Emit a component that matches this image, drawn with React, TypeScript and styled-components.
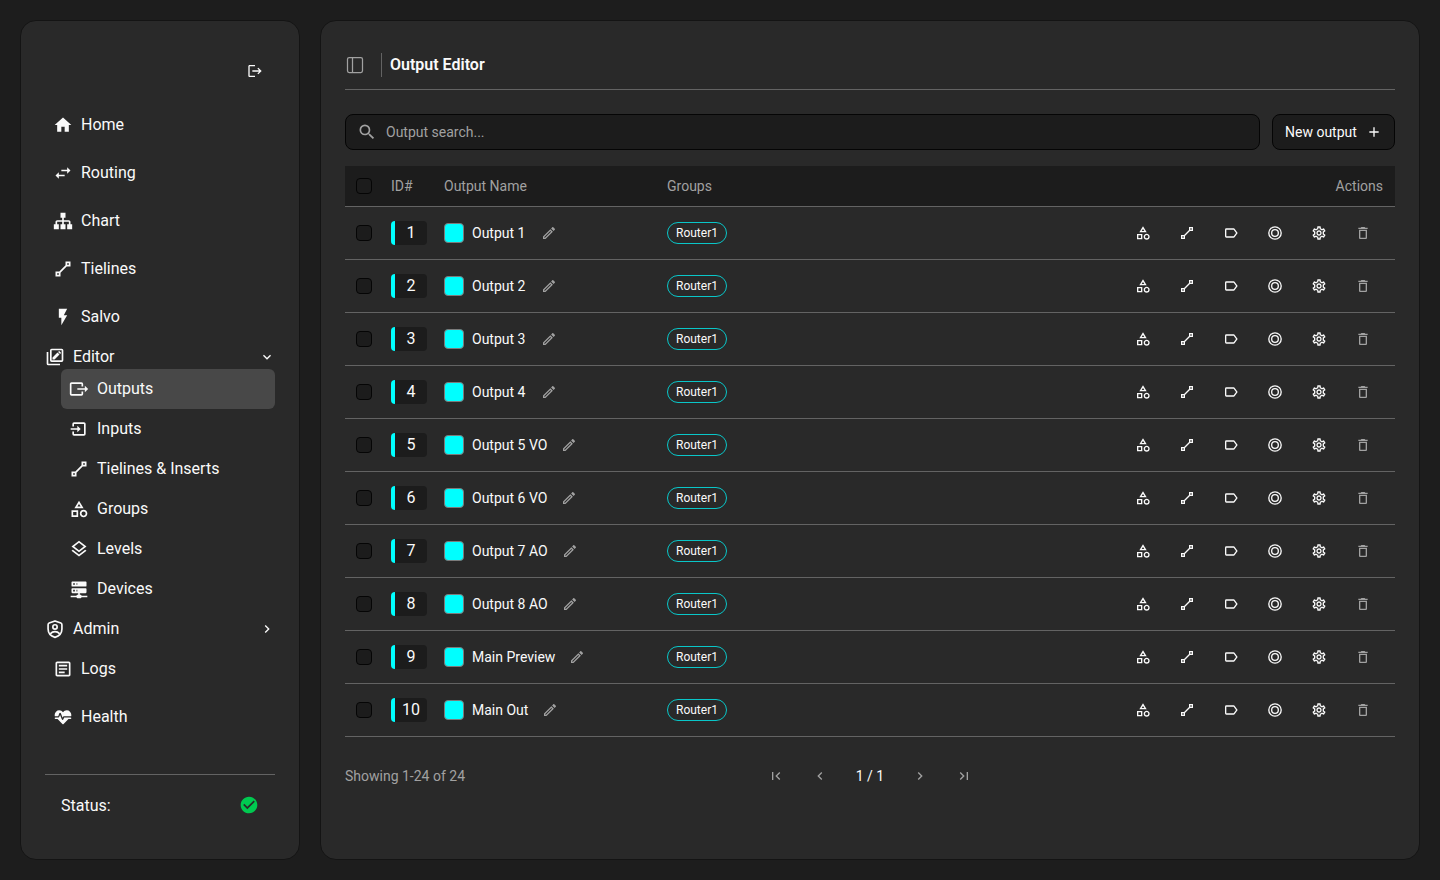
import React, { useState } from "react";
import styled, { createGlobalStyle, css } from "styled-components";
import {
  MdAdd,
  MdCheckCircle,
  MdChevronLeft,
  MdChevronRight,
  MdDeleteOutline,
  MdExpandMore,
  MdFirstPage,
  MdFlashOn,
  MdHome,
  MdLastPage,
  MdOutlineEdit,
  MdOutlineSettings,
  MdSearch,
  MdSwapHoriz,
} from "react-icons/md";

const color = {
  page: "#1d1d1d",
  panel: "#292929",
  panelEdge: "#141414",
  well: "#1c1c1c",
  black: "#050505",
  line: "#636363",
  active: "#484848",
  text: "#fafafa",
  muted: "#a1a1a1",
  cyan: "#00ffff",
  pill: "#09c6c8",
  green: "#00c950",
};

const GlobalStyle = createGlobalStyle`
  *, *::before, *::after { box-sizing: border-box; }
  body {
    margin: 0;
    background: ${color.page};
    color: ${color.text};
    font-family: Roboto, "Liberation Sans", sans-serif;
    font-size: 14px;
    line-height: 20px;
  }
  button, input { font: inherit; color: inherit; }
  a { color: inherit; text-decoration: none; }
`;

/* ---------- icons ---------- */

const paths = {
  logout:
    "M17 7L15.59 8.41L18.17 11H8V13H18.17L15.59 15.58L17 17L22 12M4 5H12V3H4C2.9 3 2 3.9 2 5V19C2 20.1 2.9 21 4 21H12V19H4V5Z",
  sitemap:
    "M9,2V8H11V11H5C3.89,11 3,11.89 3,13V16H1V22H7V16H5V13H11V16H9V22H15V16H13V13H19V16H17V22H23V16H21V13C21,11.89 20.11,11 19,11H13V8H15V2H9Z",
  line: "M15,3V7.59L7.59,15H3V21H9V16.42L16.42,9H21V3M17,5H19V7H17M5,17H7V19H5",
  editor:
    "M8,2H20A2,2 0 0,1 22,4V16A2,2 0 0,1 20,18H8A2,2 0 0,1 6,16V4A2,2 0 0,1 8,2M8,4V16H20V4H8M2,6H4V20H18V22H4A2,2 0 0,1 2,20V6M9,15V12.6L15,6.6L17.4,9L11.4,15H9M15.7,5.9L16.6,5C16.8,4.8 17.1,4.8 17.3,5L19,6.700C19.2,6.900 19.2,7.200 19,7.400L18.1,8.300L15.7,5.9Z",
  output:
    "M23,12L19,8V11H10V13H19V16M1,18V6C1,4.89 1.9,4 3,4H15A2,2 0 0,1 17,6V9H15V6H3V18H15V15H17V18A2,2 0 0,1 15,20H3A2,2 0 0,1 1,18Z",
  input:
    "M14,12L10,8V11H2V13H10V16M20,18V6C20,4.89 19.1,4 18,4H6A2,2 0 0,0 4,6V9H6V6H18V18H6V15H4V18A2,2 0 0,0 6,20H18A2,2 0 0,0 20,18Z",
  shapes:
    "M11,13.5V21.5H3V13.5H11M9,15.5H5V19.5H9V15.5M12,2L17.5,11H6.5L12,2M12,5.86L10.08,9H13.92L12,5.86M17.5,13C20,13 22,15 22,17.5C22,20 20,22 17.5,22C15,22 13,20 13,17.5C13,15 15,13 17.5,13M17.5,15A2.5,2.5 0 0,0 15,17.5A2.5,2.5 0 0,0 17.5,20A2.5,2.5 0 0,0 20,17.5A2.5,2.5 0 0,0 17.5,15Z",
  layers:
    "M12,18.54L19.37,12.8L21,14.07L12,21.07L3,14.07L4.62,12.81L12,18.54M12,16L3,9L12,2L21,9L12,16M12,4.53L6.26,9L12,13.47L17.74,9L12,4.53Z",
  server:
    "M13,19H14A1,1 0 0,1 15,20H22V22H15A1,1 0 0,1 14,23H10A1,1 0 0,1 9,22H2V20H9A1,1 0 0,1 10,19H11V17H4A1,1 0 0,1 3,16V12A1,1 0 0,1 4,11H20A1,1 0 0,1 21,12V16A1,1 0 0,1 20,17H13V19M4,3H20A1,1 0 0,1 21,4V8A1,1 0 0,1 20,9H4A1,1 0 0,1 3,8V4A1,1 0 0,1 4,3M9,7H10V5H9V7M9,15H10V13H9V15M5,5V7H7V5H5M5,13V15H7V13H5Z",
  logs: "M5,3C3.89,3 3,3.89 3,5V19C3,20.11 3.89,21 5,21H19C20.11,21 21,20.11 21,19V5C21,3.89 20.11,3 19,3H5M5,5H19V19H5V5M7,7V9H17V7H7M7,11V13H17V11H7M7,15V17H14V15H7Z",
  health:
    "M7.5,4A5.5,5.5 0 0,0 2,9.5C2,10 2.09,10.5 2.22,11H6.3L7.57,7.63C7.87,6.83 9.05,6.75 9.43,7.63L11.5,13L12.09,11.58C12.22,11.25 12.57,11 13,11H21.78C21.91,10.5 22,10 22,9.5A5.5,5.5 0 0,0 16.5,4C14.64,4 13,4.93 12,6.34C11,4.93 9.36,4 7.5,4V4M3,12.5A1,1 0 0,0 2,13.5A1,1 0 0,0 3,14.5H5.44L11,20C12,20.9 12,20.9 13,20L18.56,14.5H21A1,1 0 0,0 22,13.5A1,1 0 0,0 21,12.5H13.4L12.47,14.8C12.07,15.81 10.92,15.67 10.55,14.83L8.5,9.5L7.54,11.83C7.39,12.21 7.05,12.5 6.6,12.5H3Z",
  label:
    "M16,17H5V7H16L19.55,12M17.63,5.84C17.27,5.33 16.67,5 16,5H5A2,2 0 0,0 3,7V17A2,2 0 0,0 5,19H16C16.67,19 17.27,18.66 17.63,18.15L22,12L17.63,5.84Z",
};

function PathIcon({ name, size = 20 }: { name: keyof typeof paths; size?: number }) {
  return (
    <svg width={size} height={size} viewBox="0 0 24 24" fill="currentColor" fillRule="evenodd" aria-hidden>
      <path d={paths[name]} />
    </svg>
  );
}

function StrokeIcon({ size = 20, width = 2, children }: { size?: number; width?: number; children: React.ReactNode }) {
  return (
    <svg
      width={size}
      height={size}
      viewBox="0 0 24 24"
      fill="none"
      stroke="currentColor"
      strokeWidth={width}
      strokeLinejoin="round"
      aria-hidden
    >
      {children}
    </svg>
  );
}

const AdminIcon = () => (
  <StrokeIcon>
    <path d="M12 2.300L5 4.900Q3.700 5.400 3.700 6.800V12C3.700 16.800 7 20.500 12 22C17 20.500 20.300 16.800 20.300 12V6.800Q20.300 5.400 19 4.900Z" />
    <circle cx="12" cy="9.500" r="2.600" />
    <path d="M6.300 17.800C8 16 9.800 15.200 12 15.200s4 .8 5.700 2.600" />
  </StrokeIcon>
);

const RingsIcon = () => (
  <StrokeIcon size={16}>
    <circle cx="12" cy="12" r="9.300" />
    <circle cx="12" cy="12" r="5" />
  </StrokeIcon>
);

const PanelIcon = () => (
  <StrokeIcon width={1.5}>
    <rect x="3" y="3" width="18" height="18" rx="2" />
    <path d="M9 3v18" />
  </StrokeIcon>
);

/* ---------- frame ---------- */

const Page = styled.div`
  display: flex;
  gap: 20px;
  min-height: 100vh;
  padding: 20px;
`;

const panel = css`
  display: flex;
  flex-direction: column;
  padding: 24px;
  background: ${color.panel};
  border: 1px solid ${color.panelEdge};
  border-radius: 16px;
`;

const Sidebar = styled.aside`
  ${panel}
  flex: 0 0 280px;
  font-size: 16px;
  line-height: 24px;
`;

const Main = styled.main`
  ${panel}
  flex: 1;
  min-width: 0;
`;

const IconButton = styled.button<{ $w?: number; $h?: number; $muted?: boolean }>`
  display: inline-flex;
  align-items: center;
  justify-content: center;
  width: ${(p) => p.$w ?? 40}px;
  height: ${(p) => p.$h ?? 40}px;
  padding: 0;
  border: 0;
  border-radius: 8px;
  background: none;
  color: ${(p) => (p.$muted ? color.muted : color.text)};
  cursor: pointer;
`;

/* ---------- sidebar ---------- */

const SidebarTop = styled.div`
  display: flex;
  align-items: center;
  justify-content: flex-end;
  height: 52px;
  margin-bottom: 8px;
`;

const Nav = styled.nav`
  display: flex;
  flex: 1;
  flex-direction: column;
  gap: 8px;
`;

const NavLink = styled.a<{ $active?: boolean }>`
  display: flex;
  align-items: center;
  gap: 8px;
  height: 40px;
  padding: 0 8px;
  border-radius: 6px;
  background: ${(p) => (p.$active ? color.active : "transparent")};
`;

const NavGroup = styled.button`
  display: flex;
  align-items: center;
  gap: 8px;
  width: 100%;
  height: 24px;
  padding: 0;
  border: 0;
  background: none;
  text-align: left;
  cursor: pointer;
`;

const GroupLabel = styled.span`
  flex: 1;
`;

const SubNav = styled.div`
  display: flex;
  flex-direction: column;
  padding-left: 16px;
`;

const StatusBar = styled.div`
  display: flex;
  align-items: center;
  justify-content: space-between;
  height: 61px;
  padding: 0 16px;
  border-top: 1px solid ${color.line};
  svg { color: ${color.green}; }
`;

const StatusLabel = styled.span`
  padding-top: 2px;
`;

/* ---------- main header ---------- */

const Header = styled.header`
  display: flex;
  align-items: center;
  gap: 8px;
  height: 45px;
  padding-bottom: 4px;
  border-bottom: 1px solid ${color.line};
`;

const ToggleCell = styled.div`
  display: flex;
  align-items: center;
  width: 37px;
  height: 24px;
  border-right: 1px solid ${color.line};
`;

const Title = styled.h1`
  margin: 0;
  font-size: 16px;
  line-height: 24px;
  font-weight: 600;
`;

const Toolbar = styled.div`
  display: flex;
  gap: 12px;
  margin: 24px 0 16px;
`;

const SearchBox = styled.label`
  display: flex;
  flex: 1;
  align-items: center;
  gap: 9px;
  height: 36px;
  padding: 0 11px;
  border: 1px solid ${color.black};
  border-radius: 8px;
  background: ${color.well};
  color: ${color.muted};
`;

const SearchInput = styled.input`
  flex: 1;
  min-width: 0;
  padding: 0;
  border: 0;
  outline: 0;
  background: none;
  color: ${color.text};
  &::placeholder { color: ${color.muted}; opacity: 1; }
`;

const NewButton = styled.button`
  display: flex;
  align-items: center;
  justify-content: space-between;
  min-width: 123px;
  height: 36px;
  padding: 0 12px;
  border: 1px solid ${color.black};
  border-radius: 8px;
  background: ${color.well};
  cursor: pointer;
`;

/* ---------- table ---------- */

const Table = styled.table`
  width: 100%;
  table-layout: fixed;
  border-collapse: separate;
  border-spacing: 0;
`;

const Th = styled.th<{ $w?: number; $end?: boolean }>`
  width: ${(p) => (p.$w ? `${p.$w}px` : "auto")};
  height: 41px;
  padding: 0 ${(p) => (p.$end ? 12 : 8)}px 0 8px;
  border-bottom: 1px solid ${color.line};
  background: ${color.well};
  color: ${color.muted};
  font-weight: 400;
  text-align: ${(p) => (p.$end ? "right" : "left")};
`;

const Td = styled.td<{ $end?: boolean }>`
  height: 53px;
  padding: 0 ${(p) => (p.$end ? 12 : 8)}px 0 8px;
  border-bottom: 1px solid ${color.line};
`;

const CheckWrap = styled.div`
  display: flex;
  justify-content: center;
`;

const Check = styled.input`
  appearance: none;
  width: 16px;
  height: 16px;
  margin: 0;
  border: 1px solid ${color.black};
  border-radius: 4px;
  background: ${color.well};
  &:checked { background: ${color.cyan}; }
`;

const Cell = styled.div<{ $end?: boolean }>`
  display: flex;
  align-items: center;
  justify-content: ${(p) => (p.$end ? "flex-end" : "flex-start")};
  gap: ${(p) => (p.$end ? 4 : 8)}px;
  white-space: nowrap;
`;

const IdBadge = styled.span`
  min-width: 36px;
  padding: 0 7px;
  border-left: 4px solid ${color.cyan};
  border-radius: 4px;
  background: ${color.well};
  font-size: 16px;
  line-height: 24px;
  text-align: center;
`;

const Swatch = styled.button`
  width: 20px;
  height: 20px;
  padding: 0;
  border: 1px solid #7b7b7b;
  border-radius: 4px;
  background: ${color.cyan};
`;

const OutputName = styled.span`
  min-width: 55px;
`;

const Pill = styled.span`
  height: 22px;
  padding: 0 8px;
  border: 1px solid ${color.pill};
  border-radius: 11px;
  font-size: 12px;
  line-height: 20px;
`;

/* ---------- footer ---------- */

const Footer = styled.footer`
  display: grid;
  grid-template-columns: 1fr auto 1fr;
  align-items: center;
  height: 38px;
  margin-top: 20px;
  color: ${color.muted};
`;

const Pager = styled.div`
  display: flex;
  align-items: center;
  gap: 4px;
`;

const PageCount = styled.span`
  min-width: 52px;
  color: ${color.text};
  text-align: center;
`;

/* ---------- data ---------- */

const outputs = [
  "Output 1",
  "Output 2",
  "Output 3",
  "Output 4",
  "Output 5 VO",
  "Output 6 VO",
  "Output 7 AO",
  "Output 8 AO",
  "Main Preview",
  "Main Out",
];

const topLinks = [
  { label: "Home", icon: <MdHome size={20} /> },
  { label: "Routing", icon: <MdSwapHoriz size={20} /> },
  { label: "Chart", icon: <PathIcon name="sitemap" /> },
  { label: "Tielines", icon: <PathIcon name="line" /> },
  { label: "Salvo", icon: <MdFlashOn size={20} /> },
];

const editorLinks = [
  { label: "Outputs", icon: <PathIcon name="output" /> },
  { label: "Inputs", icon: <PathIcon name="input" /> },
  { label: "Tielines & Inserts", icon: <PathIcon name="line" /> },
  { label: "Groups", icon: <PathIcon name="shapes" /> },
  { label: "Levels", icon: <PathIcon name="layers" /> },
  { label: "Devices", icon: <PathIcon name="server" /> },
];

const endLinks = [
  { label: "Logs", icon: <PathIcon name="logs" /> },
  { label: "Health", icon: <PathIcon name="health" /> },
];

const rowActions = [
  { label: "Groups", icon: <PathIcon name="shapes" size={16} /> },
  { label: "Tielines", icon: <PathIcon name="line" size={16} /> },
  { label: "Label", icon: <PathIcon name="label" size={16} /> },
  { label: "Button", icon: <RingsIcon /> },
  { label: "Settings", icon: <MdOutlineSettings size={16} /> },
  { label: "Delete", icon: <MdDeleteOutline size={16} />, muted: true },
];

function OutputRow({ id, name }: { id: number; name: string }) {
  return (
    <tr>
      <Td>
        <CheckWrap>
          <Check type="checkbox" aria-label={`Select ${name}`} />
        </CheckWrap>
      </Td>
      <Td>
        <Cell>
          <IdBadge>{id}</IdBadge>
        </Cell>
      </Td>
      <Td>
        <Cell>
          <Swatch aria-label={`Colour of ${name}`} />
          <OutputName>{name}</OutputName>
          <IconButton $w={28} $h={28} $muted aria-label={`Rename ${name}`}>
            <MdOutlineEdit size={16} />
          </IconButton>
        </Cell>
      </Td>
      <Td>
        <Cell>
          <Pill>Router1</Pill>
        </Cell>
      </Td>
      <Td $end>
        <Cell $end>
          {rowActions.map((a) => (
            <IconButton key={a.label} $muted={a.muted} aria-label={`${a.label}: ${name}`}>
              {a.icon}
            </IconButton>
          ))}
        </Cell>
      </Td>
    </tr>
  );
}

export default function App() {
  const [query, setQuery] = useState("");
  const [editorOpen, setEditorOpen] = useState(true);

  return (
    <>
      <GlobalStyle />
      <Page>
        <Sidebar>
          <SidebarTop>
            <IconButton aria-label="Log out">
              <PathIcon name="logout" size={16} />
            </IconButton>
          </SidebarTop>
          <Nav>
            {topLinks.map((l) => (
              <NavLink key={l.label} href="#">
                {l.icon}
                {l.label}
              </NavLink>
            ))}
            <div>
              <NavGroup aria-expanded={editorOpen} onClick={() => setEditorOpen(!editorOpen)}>
                <PathIcon name="editor" />
                <GroupLabel>Editor</GroupLabel>
                {editorOpen ? <MdExpandMore size={16} /> : <MdChevronRight size={16} />}
              </NavGroup>
              {editorOpen && (
                <SubNav>
                  {editorLinks.map((l) => (
                    <NavLink key={l.label} href="#" $active={l.label === "Outputs"}>
                      {l.icon}
                      {l.label}
                    </NavLink>
                  ))}
                </SubNav>
              )}
            </div>
            <NavGroup aria-expanded={false}>
              <AdminIcon />
              <GroupLabel>Admin</GroupLabel>
              <MdChevronRight size={16} />
            </NavGroup>
            {endLinks.map((l) => (
              <NavLink key={l.label} href="#">
                {l.icon}
                {l.label}
              </NavLink>
            ))}
          </Nav>
          <StatusBar>
            <StatusLabel>Status:</StatusLabel>
            <MdCheckCircle size={20} />
          </StatusBar>
        </Sidebar>

        <Main>
          <Header>
            <ToggleCell>
              <IconButton $w={20} $h={20} $muted aria-label="Toggle sidebar">
                <PanelIcon />
              </IconButton>
            </ToggleCell>
            <Title>Output Editor</Title>
          </Header>

          <Toolbar>
            <SearchBox>
              <MdSearch size={20} />
              <SearchInput
                type="text"
                aria-label="Output search"
                placeholder="Output search..."
                value={query}
                onChange={(e) => setQuery(e.target.value)}
              />
            </SearchBox>
            <NewButton>
              New output
              <MdAdd size={16} />
            </NewButton>
          </Toolbar>

          <Table>
            <thead>
              <tr>
                <Th $w={38}>
                  <CheckWrap>
                    <Check type="checkbox" aria-label="Select all outputs" />
                  </CheckWrap>
                </Th>
                <Th $w={53}>ID#</Th>
                <Th $w={223}>Output Name</Th>
                <Th>Groups</Th>
                <Th $end>Actions</Th>
              </tr>
            </thead>
            <tbody>
              {outputs
                .map((name, i) => ({ id: i + 1, name }))
                .filter((o) => o.name.toLowerCase().includes(query.toLowerCase()))
                .map((o) => (
                  <OutputRow key={o.id} id={o.id} name={o.name} />
                ))}
            </tbody>
          </Table>

          <Footer>
            <span>Showing 1-24 of 24</span>
            <Pager>
              <IconButton $h={36} $muted aria-label="First page">
                <MdFirstPage size={16} />
              </IconButton>
              <IconButton $h={36} $muted aria-label="Previous page">
                <MdChevronLeft size={16} />
              </IconButton>
              <PageCount>1 / 1</PageCount>
              <IconButton $h={36} $muted aria-label="Next page">
                <MdChevronRight size={16} />
              </IconButton>
              <IconButton $h={36} $muted aria-label="Last page">
                <MdLastPage size={16} />
              </IconButton>
            </Pager>
          </Footer>
        </Main>
      </Page>
    </>
  );
}
